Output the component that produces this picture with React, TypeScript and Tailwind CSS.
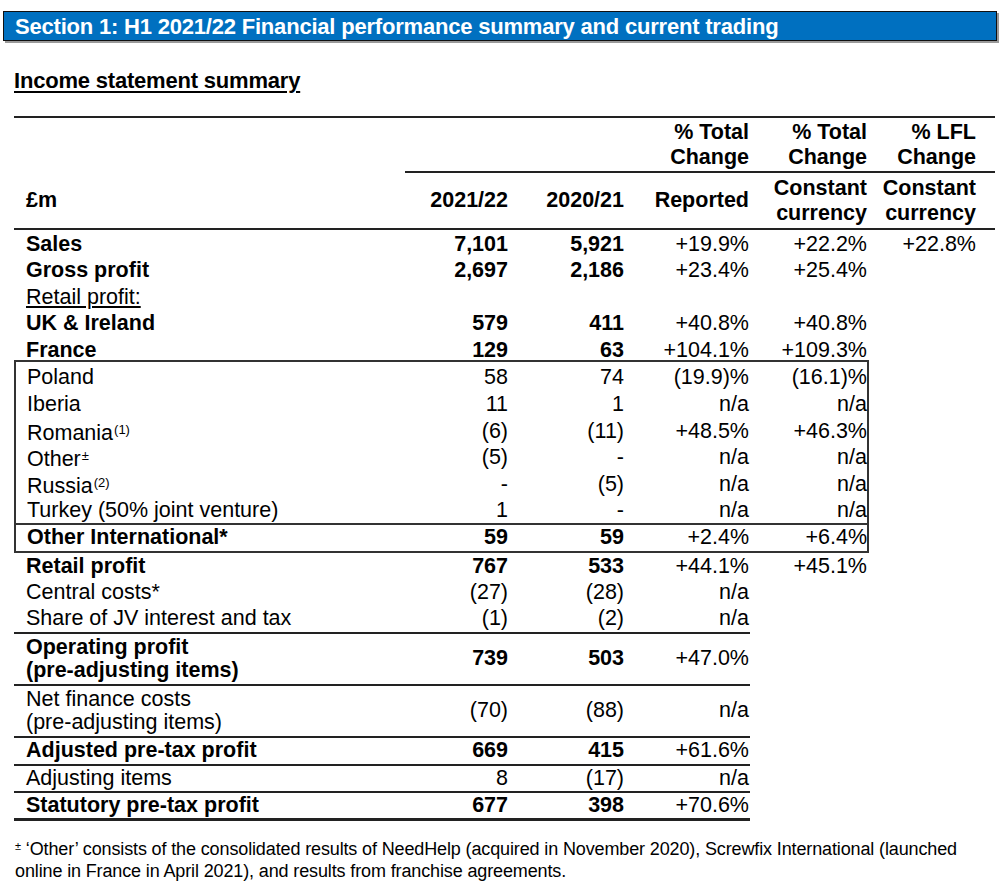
import React from "react";

type Cell = string | React.ReactNode;

const W = ["w-[378px]", "w-[116px]", "w-[116px]", "w-[125px]", "w-[118px]", "w-[109px]"];

function Row({
  cells,
  bold,
  h = "h-[26.5px]",
  inBox,
}: {
  cells: Cell[];
  bold?: boolean;
  h?: string;
  inBox?: boolean;
}) {
  return (
    <div className={`flex items-center ${h}`}>
      {cells.map((c, i) => (
        <div
          key={i}
          className={`${i === 0 ? (inBox ? "w-[376px] pl-[11px]" : "w-[378px] pl-[12px]") : W[i]} shrink-0 whitespace-nowrap ${
            i === 0 ? "text-left" : "text-right"
          } ${bold && i <= 2 ? "font-bold" : ""} leading-[23px]`}
        >
          {c}
        </div>
      ))}
    </div>
  );
}

const sup = (t: string) => (
  <span className="text-[13px] align-[6px] ml-[1px]">{t}</span>
);

export default function App() {
  return (
    <div
      className="w-[1000px] h-[891px] bg-white text-black overflow-hidden"
      style={{ fontFamily: '"Liberation Sans", Arial, sans-serif' }}
    >
      <div className="pt-[11px] pl-[3px]">
        <div className="w-[994px] h-[30px] bg-[#0070c0] border border-[#111] shadow-[2px_2px_0_#9a9a9a] flex items-center pl-[11px]">
          <span className="text-white font-bold text-[22px] tracking-[-0.2px]">
            Section 1: H1 2021/22 Financial performance summary and current trading
          </span>
        </div>
      </div>

      <div className="pl-[14px] mt-[27px] h-[24px] flex items-center">
        <span className="font-bold text-[22px] underline underline-offset-[3px] decoration-[2px] tracking-[-0.2px]">
          Income statement summary
        </span>
      </div>

      <div className="ml-[14px] mt-[24px] w-[981px] text-[21.5px]">
        {/* header */}
        <div className="border-t-2 border-[#222]">
          <div className="flex h-[55px] items-center">
            <div className="w-[391px] shrink-0" />
            <div className="flex-1 h-full flex border-b-2 border-[#222] items-center font-bold leading-[25px]">
              <div className="w-[103px]" />
              <div className="w-[116px]" />
              <div className="w-[125px] text-right">% Total<br />Change</div>
              <div className="w-[118px] text-right">% Total<br />Change</div>
              <div className="w-[109px] text-right">% LFL<br />Change</div>
            </div>
          </div>
          <div className="flex h-[57px] items-center border-b-2 border-[#222] font-bold leading-[25px]">
            <div className="w-[378px] pl-[12px]">£m</div>
            <div className="w-[116px] text-right">2021/22</div>
            <div className="w-[116px] text-right">2020/21</div>
            <div className="w-[125px] text-right">Reported</div>
            <div className="w-[118px] text-right">Constant<br />currency</div>
            <div className="w-[109px] text-right">Constant<br />currency</div>
          </div>
        </div>

        <div className="pt-[1px]">
          <Row bold cells={["Sales", "7,101", "5,921", "+19.9%", "+22.2%", "+22.8%"]} />
          <Row bold cells={["Gross profit", "2,697", "2,186", "+23.4%", "+25.4%", ""]} />
          <Row cells={[<span className="underline underline-offset-[2px]">Retail profit:</span>, "", "", "", "", ""]} />
          <Row bold cells={["UK & Ireland", "579", "411", "+40.8%", "+40.8%", ""]} />
          <Row bold cells={["France", "129", "63", "+104.1%", "+109.3%", ""]} />
        </div>

        <div className="w-[855px] border-2 border-[#333] -mt-[4px] pt-[3px]">
          <Row inBox h="h-[26.7px]" cells={["Poland", "58", "74", "(19.9)%", "(16.1)%"]} />
          <Row inBox h="h-[26.7px]" cells={["Iberia", "11", "1", "n/a", "n/a"]} />
          <Row inBox h="h-[26.7px]" cells={[<>Romania{sup("(1)")}</>, "(6)", "(11)", "+48.5%", "+46.3%"]} />
          <Row inBox h="h-[26.7px]" cells={[<>Other{sup("±")}</>, "(5)", "-", "n/a", "n/a"]} />
          <Row inBox h="h-[26.7px]" cells={[<>Russia{sup("(2)")}</>, "-", "(5)", "n/a", "n/a"]} />
          <Row inBox cells={["Turkey (50% joint venture)", "1", "-", "n/a", "n/a"]} h="h-[25px]" />
          <div className="border-t-2 border-[#333]">
            <Row inBox bold cells={["Other International*", "59", "59", "+2.4%", "+6.4%"]} h="h-[26px]" />
          </div>
        </div>

        <div className="w-[736px]">
          <Row bold cells={["Retail profit", "767", "533", "+44.1%", "+45.1%"]} />
          <Row cells={["Central costs*", "(27)", "(28)", "n/a"]} />
          <Row cells={["Share of JV interest and tax", "(1)", "(2)", "n/a"]} h="h-[26px]" />
          <div className="border-t-2 border-[#222]">
            <Row bold cells={[<>Operating profit<br />(pre-adjusting items)</>, "739", "503", "+47.0%"]} h="h-[50px]" />
          </div>
          <div className="border-t-2 border-[#222]">
            <Row cells={[<>Net finance costs<br />(pre-adjusting items)</>, "(70)", "(88)", "n/a"]} h="h-[50px]" />
          </div>
          <div className="border-t-2 border-[#222]">
            <Row bold cells={["Adjusted pre-tax profit", "669", "415", "+61.6%"]} h="h-[26px]" />
          </div>
          <div className="border-t-2 border-[#222]">
            <Row cells={["Adjusting items", "8", "(17)", "n/a"]} h="h-[25px]" />
          </div>
          <div className="border-t-2 border-[#222] border-b-[3px]">
            <Row bold cells={["Statutory pre-tax profit", "677", "398", "+70.6%"]} h="h-[25px]" />
          </div>
        </div>
      </div>

      <div className="pl-[15px] mt-[18px] text-[18px] leading-[20px] tracking-[-0.13px] whitespace-nowrap">
        <span className="text-[11px] relative -top-[5px]">±</span> ‘Other’ consists of the consolidated results of NeedHelp (acquired in November 2020), Screwfix International (launched
        <br />
        online in France in April 2021), and results from franchise agreements.
      </div>
    </div>
  );
}
